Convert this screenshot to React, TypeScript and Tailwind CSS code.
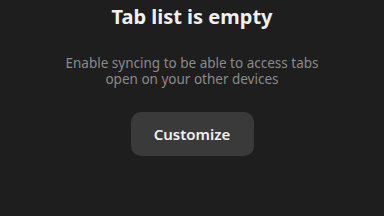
export default function App() {
  return (
    <div className="w-[384px] h-[216px] bg-[#1e1e1e] flex flex-col items-center overflow-hidden" style={{ fontFamily: '"Noto Sans", sans-serif' }}>
      <div className="mt-[3px] text-[20px] leading-[28px] font-bold text-[#f0f0f0]">Tab list is empty</div>
      <div className="mt-[24px] text-[13.5px] leading-[16px] text-[#8a8a8a] text-center">
        Enable syncing to be able to access tabs<br />open on your other devices
      </div>
      <div className="mt-[25px] w-[123px] h-[44px] rounded-[10px] bg-[#3a3a3a] flex items-center justify-center text-[15px] font-semibold text-[#f0f0f0]">
        Customize
      </div>
    </div>
  );
}
